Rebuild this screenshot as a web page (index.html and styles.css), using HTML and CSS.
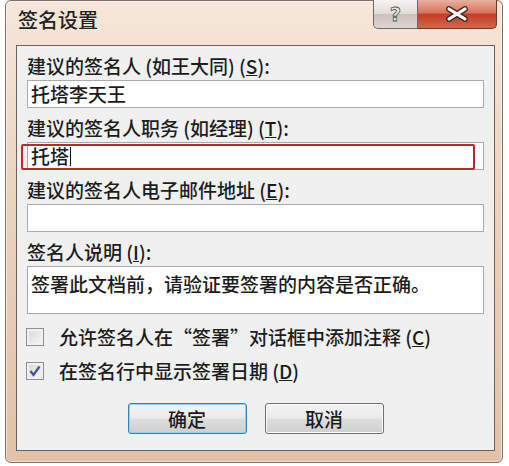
FILE: index.html
```html
<!DOCTYPE html>
<html lang="zh-CN">

<head>
    <meta charset="UTF-8">
    <meta name="viewport" content="width=device-width, initial-scale=1.0">
    <title>签名设置</title>
    <link rel="stylesheet" href="styles.css">
</head>

<body>
    <div class="window">
        <div class="title-bar">
            <span class="title">签名设置</span>
            <div class="caption">
                <button class="cap-help">?</button>
                <button class="cap-close">
                    <svg width="26" height="16" viewBox="0 0 26 16">
                        <path d="M5 3 L21 13 M21 3 L5 13" stroke="#4a2a22" stroke-width="6" stroke-linecap="round" fill="none" />
                        <path d="M5 3 L21 13 M21 3 L5 13" stroke="#ffffff" stroke-width="3.2" stroke-linecap="round" fill="none" />
                    </svg>
                </button>
            </div>
        </div>

        <div class="panel">
            <div class="field">
                <label class="field-label">建议的签名人 (如王大同) (<u>S</u>):</label>
                <div class="input">托塔李天王</div>
            </div>

            <div class="field">
                <label class="field-label">建议的签名人职务 (如经理) (<u>T</u>):</label>
                <div class="input-wrap">
                    <div class="input">托塔<span class="caret"></span></div>
                    <div class="highlight"></div>
                </div>
            </div>

            <div class="field">
                <label class="field-label">建议的签名人电子邮件地址 (<u>E</u>):</label>
                <div class="input"></div>
            </div>

            <div class="field">
                <label class="field-label">签名人说明 (<u>I</u>):</label>
                <div class="input textarea">签署此文档前，请验证要签署的内容是否正确。</div>
            </div>

            <div class="check-row">
                <span class="check-box"></span>
                <span>允许签名人在“签署”对话框中添加注释 (<u>C</u>)</span>
            </div>
            <div class="check-row">
                <span class="check-box">
                    <svg width="16" height="16" viewBox="0 0 16 16">
                        <path d="M3.5 8 L6.5 12 L12.5 3.5" stroke="#3a5494" stroke-width="2.2" fill="none" />
                    </svg>
                </span>
                <span>在签名行中显示签署日期 (<u>D</u>)</span>
            </div>

            <div class="actions">
                <button class="btn btn-default">确定</button>
                <button class="btn">取消</button>
            </div>
        </div>
    </div>
</body>

</html>
```

FILE: styles.css
```css
body {
    margin: 0;
    background: #ffffff;
    font-family: "Noto Sans CJK SC", "Noto Sans", sans-serif;
    font-weight: 500;
    color: #1c1c1c;
}

.window {
    width: 498px;
    height: 463px;
    margin-left: 5px;
    box-sizing: border-box;
    border: 1px solid #7e7068;
    border-radius: 6px;
    background: linear-gradient(#f6e7da, #ecd4bf 40%, #e2c2a6);
    box-shadow: inset 0 0 0 1px rgba(255, 255, 255, 0.55);
    padding: 0 7px 11px 10px;
    display: flex;
    flex-direction: column;
}

/* title bar */

.title-bar {
    height: 44px;
    flex-shrink: 0;
    display: flex;
    align-items: flex-start;
}

.title {
    font-size: 20px;
    line-height: 24px;
    padding: 7px 0 0 2px;
    color: #222;
}

.caption {
    display: flex;
    margin: -1px -2px 0 auto;
}

.caption button {
    height: 29px;
    padding: 0;
    box-sizing: border-box;
    cursor: pointer;
    display: flex;
    align-items: center;
    justify-content: center;
}

.cap-help {
    width: 45px;
    border: 1px solid #6e6864;
    border-top: none;
    border-radius: 0 0 0 5px;
    background: linear-gradient(#f6f3f0, #e2dcd8 48%, #c9c1bc 52%, #dcd6d2);
    font-family: "DejaVu Sans", sans-serif;
    font-weight: bold;
    font-size: 19px;
    color: #e6e6e6;
    -webkit-text-stroke: 0.8px #555;
}

.cap-close {
    width: 79px;
    border: 1px solid #6e3a2e;
    border-left: none;
    border-top: none;
    border-radius: 0 0 5px 0;
    background: linear-gradient(#eab09f, #db735a 45%, #c43d24 52%, #d2674b);
}

/* panel */

.panel {
    flex: 1;
    border: 1px solid #6b625b;
    background: #f0f0f0;
    padding: 9px 10px 0 10px;
    display: flex;
    flex-direction: column;
}

.field + .field {
    margin-top: 9px;
}

.field-label {
    display: block;
    height: 22px;
    font-size: 19px;
    line-height: 22px;
    white-space: nowrap;
}

.input {
    margin-top: 3px;
    height: 28px;
    box-sizing: border-box;
    border: 1px solid #a9abb0;
    background: #ffffff;
    font-size: 19px;
    line-height: 26px;
    padding-left: 3px;
    display: flex;
    align-items: center;
}

.textarea {
    height: 48px;
    align-items: flex-start;
    padding-top: 4px;
}

.caret {
    display: inline-block;
    width: 0;
    height: 19px;
    border-left: 1px solid #111;
    margin-left: 1px;
}

.input-wrap {
    position: relative;
    margin-top: 3px;
}

.highlight {
    position: absolute;
    left: -6px;
    right: 9px;
    top: 2px;
    bottom: 0;
    border: 2px solid #c0262e;
    border-radius: 2px;
}

/* checkboxes */

.check-row {
    display: flex;
    align-items: center;
    gap: 15px;
    height: 22px;
    font-size: 19px;
    line-height: 22px;
    margin-top: 12px;
}

.check-row:first-of-type {
    margin-top: 14px;
}

.check-box {
    width: 18px;
    height: 18px;
    box-sizing: border-box;
    margin-left: -1px;
    border: 1px solid #8e8f8f;
    background: linear-gradient(135deg, #d8d8d8, #f6f6f6);
    box-shadow: inset 0 0 0 2px #f1f1f1;
    display: flex;
    align-items: center;
    justify-content: center;
}

/* buttons */

.actions {
    display: flex;
    justify-content: center;
    gap: 18px;
    margin-top: 21px;
}

.btn {
    width: 119px;
    height: 31px;
    border: 1px solid #707070;
    border-radius: 3px;
    background: linear-gradient(#f3f3f3, #ebebeb 48%, #dddddd 52%, #cfcfcf);
    box-shadow: inset 0 0 0 1px #fbfbfb;
    font-family: "Noto Sans CJK SC", sans-serif;
    font-weight: 500;
    font-size: 19px;
    line-height: 22px;
    color: #1c1c1c;
    cursor: pointer;
}

.btn-default {
    border-color: #3c7fb1;
    box-shadow: inset 0 0 0 1px #8fd3f2;
}

.btn:hover {
    opacity: 0.9;
}
```
